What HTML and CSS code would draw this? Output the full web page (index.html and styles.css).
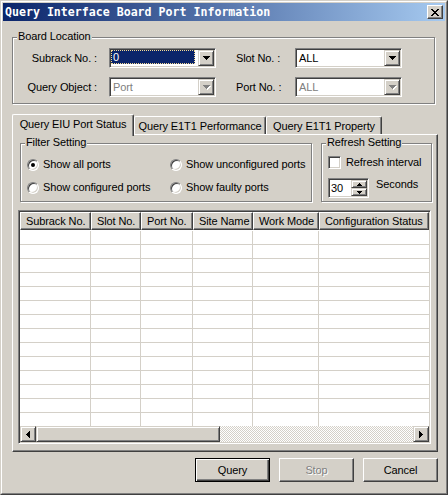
FILE: index.html
```html
<!DOCTYPE html>
<html>
<head>
<meta charset="utf-8">
<title>Query Interface Board Port Information</title>
<link rel="stylesheet" href="styles.css">
</head>
<body>
<div class="window">
 <div class="frame">
  <div class="titlebar">
   <span class="title">Query Interface Board Port Information</span>
   <span class="close"><svg width="8" height="7" viewBox="0 0 8 7" shape-rendering="crispEdges"><path fill="#000" d="M0 0h2v1h-2z M6 0h2v1h-2z M1 1h2v1h-2z M5 1h2v1h-2z M2 2h4v1h-4z M3 3h2v1h-2z M2 4h4v1h-4z M1 5h2v1h-2z M5 5h2v1h-2z M0 6h2v1h-2z M6 6h2v1h-2z"/></svg></span>
  </div>
  <div class="content">
   <div class="group board">
    <span class="legend">Board Location</span>
    <div class="board-grid">
     <span class="lbl lbl-left">Subrack No. :</span>
     <div class="combo"><span class="field"><span class="selected">0</span></span><span class="drop"><svg width="7" height="4" viewBox="0 0 7 4" shape-rendering="crispEdges"><path fill="#000" d="M0 0h7v1h-1v1h-1v1h-1v1h-1v-1h-1v-1h-1v-1h-1z"/></svg></span></div>
     <span class="lbl lbl-right">Slot No. :</span>
     <div class="combo"><span class="field">ALL</span><span class="drop"><svg width="7" height="4" viewBox="0 0 7 4" shape-rendering="crispEdges"><path fill="#000" d="M0 0h7v1h-1v1h-1v1h-1v1h-1v-1h-1v-1h-1v-1h-1z"/></svg></span></div>
     <span class="lbl lbl-left">Query Object :</span>
     <div class="combo disabled"><span class="field">Port</span><span class="drop"><svg width="8" height="5" viewBox="0 0 8 5" shape-rendering="crispEdges"><path fill="#fff" transform="translate(1 1)" d="M0 0h7v1h-1v1h-1v1h-1v1h-1v-1h-1v-1h-1v-1h-1z"/><path fill="#808080" d="M0 0h7v1h-1v1h-1v1h-1v1h-1v-1h-1v-1h-1v-1h-1z"/></svg></span></div>
     <span class="lbl lbl-right">Port No. :</span>
     <div class="combo disabled"><span class="field">ALL</span><span class="drop"><svg width="8" height="5" viewBox="0 0 8 5" shape-rendering="crispEdges"><path fill="#fff" transform="translate(1 1)" d="M0 0h7v1h-1v1h-1v1h-1v1h-1v-1h-1v-1h-1v-1h-1z"/><path fill="#808080" d="M0 0h7v1h-1v1h-1v1h-1v1h-1v-1h-1v-1h-1v-1h-1z"/></svg></span></div>
    </div>
   </div>

   <div class="tabs">
    <div class="tab tab-eiu active">Query EIU Port Status</div>
    <div class="tab tab-perf">Query E1T1 Performance</div>
    <div class="tab tab-prop">Query E1T1 Property</div>
   </div>

   <div class="panel">
    <div class="settings">
     <div class="group filter">
      <span class="legend">Filter Setting</span>
      <div class="radio-grid">
       <label class="option"><span class="radio checked"></span>Show all ports</label>
       <label class="option"><span class="radio"></span>Show unconfigured ports</label>
       <label class="option"><span class="radio"></span>Show configured ports</label>
       <label class="option"><span class="radio"></span>Show faulty ports</label>
      </div>
     </div>
     <div class="group refresh">
      <span class="legend">Refresh Setting</span>
      <label class="option"><span class="checkbox"></span>Refresh interval</label>
      <div class="spin-row">
       <div class="spin">
        <span class="spin-value">30</span>
        <span class="spin-btns">
         <span class="spin-btn"><svg width="5" height="3" viewBox="0 0 5 3" shape-rendering="crispEdges"><path fill="#000" d="M2 0h1v1h1v1h1v1h-5v-1h1v-1h1z"/></svg></span>
         <span class="spin-btn"><svg width="5" height="3" viewBox="0 0 5 3" shape-rendering="crispEdges"><path fill="#000" d="M0 0h5v1h-1v1h-1v1h-1v-1h-1v-1h-1z"/></svg></span>
        </span>
       </div>
       <span class="seconds">Seconds</span>
      </div>
     </div>
    </div>

    <div class="listview">
     <div class="lv-header">
      <span class="hcell">Subrack No.</span>
      <span class="hcell">Slot No.</span>
      <span class="hcell">Port No.</span>
      <span class="hcell">Site Name</span>
      <span class="hcell">Work Mode</span>
      <span class="hcell">Configuration Status</span>
     </div>
     <div class="lv-body">
      <div class="lv-row"><span></span><span></span><span></span><span></span><span></span><span></span></div>
      <div class="lv-row"><span></span><span></span><span></span><span></span><span></span><span></span></div>
      <div class="lv-row"><span></span><span></span><span></span><span></span><span></span><span></span></div>
      <div class="lv-row"><span></span><span></span><span></span><span></span><span></span><span></span></div>
      <div class="lv-row"><span></span><span></span><span></span><span></span><span></span><span></span></div>
      <div class="lv-row"><span></span><span></span><span></span><span></span><span></span><span></span></div>
      <div class="lv-row"><span></span><span></span><span></span><span></span><span></span><span></span></div>
      <div class="lv-row"><span></span><span></span><span></span><span></span><span></span><span></span></div>
      <div class="lv-row"><span></span><span></span><span></span><span></span><span></span><span></span></div>
      <div class="lv-row"><span></span><span></span><span></span><span></span><span></span><span></span></div>
      <div class="lv-row"><span></span><span></span><span></span><span></span><span></span><span></span></div>
      <div class="lv-row"><span></span><span></span><span></span><span></span><span></span><span></span></div>
      <div class="lv-row"><span></span><span></span><span></span><span></span><span></span><span></span></div>
      <div class="lv-row"><span></span><span></span><span></span><span></span><span></span><span></span></div>
     </div>
     <div class="hscroll">
      <span class="sb-btn"><svg width="4" height="7" viewBox="0 0 4 7" shape-rendering="crispEdges"><path fill="#000" d="M3 0h1v7h-1v-1h-1v-1h-1v-1h-1v-1h1v-1h1v-1h1z"/></svg></span>
      <span class="sb-thumb"></span>
      <span class="sb-track"></span>
      <span class="sb-btn"><svg width="4" height="7" viewBox="0 0 4 7" shape-rendering="crispEdges"><path fill="#000" d="M0 0h1v1h1v1h1v1h1v1h-1v1h-1v1h-1v1h-1z"/></svg></span>
     </div>
    </div>
   </div>

   <div class="buttons">
    <button class="btn default">Query</button>
    <button class="btn disabled">Stop</button>
    <button class="btn">Cancel</button>
   </div>
  </div>
 </div>
</div>
</body>
</html>
```

FILE: styles.css
```css
* { box-sizing: border-box; }

html, body {
  margin: 0;
  padding: 0;
  background: #d4d0c8;
}

body {
  font-family: "Liberation Sans", Arial, sans-serif;
  font-size: 11px;
  line-height: 13px;
  letter-spacing: -0.1px;
  color: #000;
}

.window {
  width: 448px;
  height: 495px;
  border: 1px solid;
  border-color: #d4d0c8 #404040 #404040 #d4d0c8;
  background: #d4d0c8;
}

.frame {
  height: 100%;
  border: 1px solid;
  border-color: #fff #808080 #808080 #fff;
  padding: 1px;
}

/* ---------- title bar ---------- */
.titlebar {
  height: 18px;
  display: flex;
  align-items: center;
  justify-content: space-between;
  background: linear-gradient(to right, #0a246a, #a6caf0);
  padding: 0 2px 0 2px;
}

.title {
  font-family: "DejaVu Sans Mono", "Liberation Mono", monospace;
  font-weight: bold;
  font-size: 11.6px;
  letter-spacing: 0;
  color: #fff;
  white-space: nowrap;
  line-height: 18px;
}

.close {
  width: 16px;
  height: 14px;
  background: #d4d0c8;
  border: 1px solid;
  border-color: #fff #404040 #404040 #fff;
  box-shadow: inset -1px -1px #808080;
  display: flex;
  align-items: center;
  justify-content: center;
  padding: 0 1px 0 0;
}
.close svg { display: block; }

/* ---------- content ---------- */
.content {
  padding: 16px 0 0 9px;
}

.group {
  position: relative;
  border: 1px solid #808080;
  box-shadow: inset 1px 1px #fff, 1px 1px #fff;
}

.legend {
  position: absolute;
  left: 4px;
  top: -8px;
  padding: 0 1px;
  background: #d4d0c8;
  white-space: nowrap;
}

.board {
  width: 423px;
}

.board-grid {
  display: grid;
  grid-template-columns: 96px 107px 79px 107px;
  grid-template-rows: 20px 20px;
  row-gap: 9px;
  align-items: center;
  padding: 10px 0 6px 0;
}

.lbl { white-space: nowrap; }
.lbl-left { text-align: right; padding-right: 12px; }
.lbl-right { padding-left: 20px; }

.combo {
  display: flex;
  height: 20px;
  border: 1px solid;
  border-color: #808080 #fff #fff #808080;
  box-shadow: inset 1px 1px #404040, inset -1px -1px #d4d0c8;
  background: #fff;
  padding: 1px;
}

.field {
  flex: 1;
  display: flex;
  align-items: center;
  padding-left: 2px;
  line-height: 16px;
}

.combo.disabled .field { color: #808080; }

.field .selected {
  margin-left: -2px;
  width: calc(100% - 1px);
  height: 14px;
  background: #0a246a;
  color: #fff;
  border: 1px dotted #f5db95;
  padding-left: 1px;
  line-height: 12px;
  align-self: flex-start;
}

.drop {
  width: 16px;
  height: 16px;
  flex: none;
  background: #d4d0c8;
  border: 1px solid;
  border-color: #d4d0c8 #404040 #404040 #d4d0c8;
  box-shadow: inset 1px 1px #fff, inset -1px -1px #808080;
  display: flex;
  align-items: center;
  justify-content: center;
}
.drop svg { display: block; }
.combo.disabled .drop svg { margin: 1px 0 0 1px; }

/* ---------- tabs ---------- */
.tabs {
  display: flex;
  align-items: flex-end;
  height: 20px;
  margin-top: 10px;
}

.tab {
  height: 18px;
  border-top: 1px solid #fff;
  border-left: 1px solid #fff;
  border-right: 1px solid #404040;
  box-shadow: inset -1px 0 #808080;
  border-radius: 2px 2px 0 0;
  text-align: center;
  padding-top: 3px;
  white-space: nowrap;
  background: #d4d0c8;
}

.tab.active {
  height: 22px;
  margin-bottom: -2px;
  position: relative;
  z-index: 1;
}

.tab-eiu { width: 122px; }
.tab-perf { width: 132px; }
.tab-prop { width: 116px; }

.panel {
  width: 426px;
  height: 318px;
  border-top: 1px solid #fff;
  border-left: 1px solid #fff;
  border-right: 1px solid #404040;
  border-bottom: 1px solid #404040;
  box-shadow: inset -1px -1px #808080;
  padding: 8px 0 0 7px;
}

.settings {
  display: flex;
  gap: 9px;
}

.filter { width: 292px; }
.refresh {
  width: 111px;
  padding: 10px 0 3px 6px;
}

.radio-grid {
  display: grid;
  grid-template-columns: 143px auto;
  grid-template-rows: 17px 17px;
  row-gap: 6px;
  padding: 12px 0 5px 6px;
}

.option {
  display: flex;
  align-items: center;
  white-space: nowrap;
  height: 17px;
}

.radio {
  position: relative;
  flex: none;
  width: 12px;
  height: 12px;
  margin-right: 4px;
  border-radius: 50%;
  border: 1px solid;
  border-color: #808080 #fff #fff #808080;
  box-shadow: inset 1px 1px #404040, inset -1px -1px #d4d0c8;
  background: #fff;
}

.radio.checked::after {
  content: "";
  position: absolute;
  left: 3px;
  top: 3px;
  width: 4px;
  height: 4px;
  border-radius: 50%;
  background: #000;
}

.checkbox {
  flex: none;
  width: 13px;
  height: 13px;
  margin-right: 5px;
  border: 1px solid;
  border-color: #808080 #fff #fff #808080;
  box-shadow: inset 1px 1px #404040, inset -1px -1px #d4d0c8;
  background: #fff;
}

.spin-row {
  display: flex;
  margin-top: 7px;
  height: 20px;
}

.spin {
  display: flex;
  width: 41px;
  height: 20px;
  border: 1px solid;
  border-color: #808080 #fff #fff #808080;
  box-shadow: inset 1px 1px #404040, inset -1px -1px #d4d0c8;
  background: #fff;
  padding: 1px;
}

.spin-value {
  flex: 1;
  padding-left: 1px;
  line-height: 16px;
}

.spin-btns {
  width: 16px;
  display: flex;
  flex-direction: column;
}

.spin-btn {
  height: 8px;
  background: #d4d0c8;
  border: 1px solid;
  border-color: #d4d0c8 #404040 #404040 #d4d0c8;
  box-shadow: inset 1px 1px #fff, inset -1px -1px #808080;
  display: flex;
  align-items: center;
  justify-content: center;
}
.spin-btn svg { display: block; }

.seconds {
  margin-left: 7px;
}

/* ---------- list view ---------- */
.listview {
  margin-top: 8px;
  margin-left: -2px;
  width: 413px;
  height: 234px;
  border: 1px solid;
  border-color: #808080 #fff #fff #808080;
  box-shadow: inset 1px 1px #404040, inset -1px -1px #d4d0c8;
  padding: 1px;
  background: #fff;
  display: flex;
  flex-direction: column;
}

.lv-header,
.lv-row {
  display: grid;
  grid-template-columns: 71px 50px 52px 60px 66px 1fr;
}

.lv-header { height: 18px; flex: none; }

.hcell {
  background: #d4d0c8;
  border-top: 1px solid #fff;
  border-left: 1px solid #fff;
  border-right: 1px solid #404040;
  border-bottom: 1px solid #404040;
  box-shadow: inset -1px -1px #808080;
  padding-left: 5px;
  line-height: 16px;
  white-space: nowrap;
  overflow: hidden;
}

.lv-body {
  flex: 1;
  overflow: hidden;
  padding-top: 1px;
}

.lv-row {
  height: 14px;
  border-bottom: 1px solid #d4d0c8;
}

.lv-row span { border-right: 1px solid #d4d0c8; }
.lv-row span:last-child { border-right: none; }

.hscroll {
  flex: none;
  height: 16px;
  display: flex;
}

.sb-btn {
  width: 16px;
  height: 16px;
  flex: none;
  background: #d4d0c8;
  border: 1px solid;
  border-color: #d4d0c8 #404040 #404040 #d4d0c8;
  box-shadow: inset 1px 1px #fff, inset -1px -1px #808080;
  display: flex;
  align-items: center;
  justify-content: center;
}
.sb-btn svg { display: block; }

.sb-thumb {
  width: 184px;
  height: 16px;
  flex: none;
  background: #d4d0c8;
  border: 1px solid;
  border-color: #d4d0c8 #404040 #404040 #d4d0c8;
  box-shadow: inset 1px 1px #fff, inset -1px -1px #808080;
}

.sb-track {
  flex: 1;
  background: repeating-conic-gradient(#fff 0 25%, #d4d0c8 0 50%) 0 0 / 2px 2px;
}

/* ---------- buttons ---------- */
.buttons {
  width: 426px;
  display: flex;
  justify-content: flex-end;
  gap: 9px;
  margin-top: 6px;
}

.btn {
  width: 75px;
  height: 24px;
  font-family: "Liberation Sans", Arial, sans-serif;
  font-size: 11px;
  letter-spacing: -0.1px;
  color: #000;
  background: #d4d0c8;
  border: 1px solid;
  border-color: #fff #404040 #404040 #fff;
  box-shadow: inset -1px -1px #808080;
  padding: 0;
  margin: 0;
}

.btn.default {
  border: 1px solid #000;
  box-shadow: inset 1px 1px #fff, inset -1px -1px #404040, inset -2px -2px #808080;
}

.btn.disabled {
  color: #808080;
  text-shadow: 1px 1px 0 #fff;
}
```
